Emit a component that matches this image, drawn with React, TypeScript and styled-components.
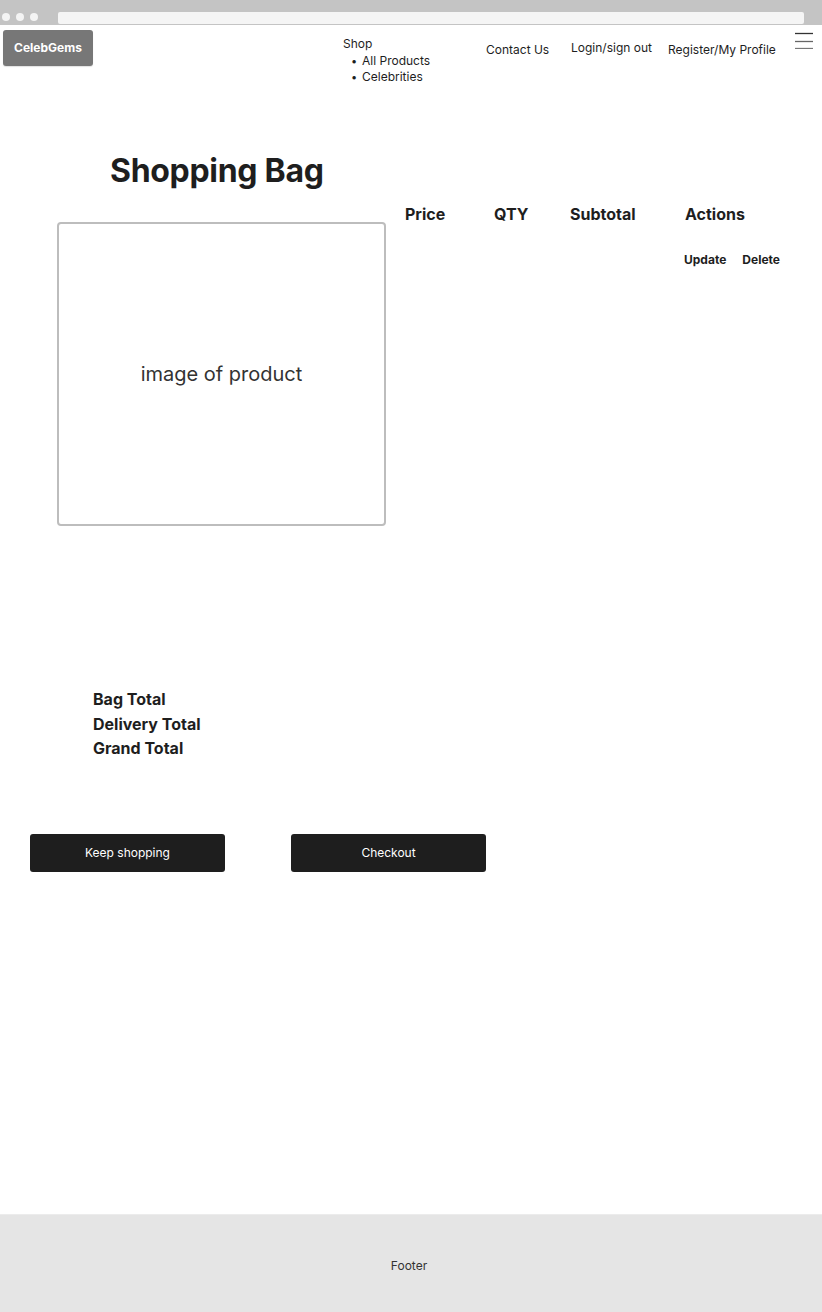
import * as React from 'react';
import styled, { createGlobalStyle } from 'styled-components';

const GlobalStyle = createGlobalStyle`
  html, body {
    margin: 0;
    padding: 0;
    background: #ffffff;
  }
  body {
    font-family: Inter, "Noto Sans", "Liberation Sans", sans-serif;
    color: #1e1e1e;
  }
`

const Page = styled.div`
  min-height: 1312px;
  display: flex;
  flex-direction: column;
`

const Chrome = styled.div`
  height: 25px;
  background: #c4c4c4;
  display: flex;
  align-items: flex-end;
  padding: 0 18px 1px 2px;
  gap: 6px;
  box-sizing: border-box;
`

const Dots = styled.div`
  display: flex;
  gap: 6px;
  padding-bottom: 3px;
`

const Dot = styled.span`
  width: 8px;
  height: 8px;
  border-radius: 50%;
  background: #f4f4f4;
`

const UrlBar = styled.div`
  flex: 1;
  height: 12px;
  margin-left: 14px;
  background: #f5f5f5;
  border-radius: 2px;
`

const Header = styled.header`
  height: 60px;
  box-sizing: border-box;
  padding: 5px 0 0 3px;
  display: grid;
  grid-template-columns: 340px 143px 85px 97px 127px 18px;
  align-items: start;
  font-size: 12px;
  line-height: 16.5px;
`

const Logo = styled.div`
  width: 90px;
  height: 36px;
  background: #777777;
  border-radius: 3px;
  color: #ffffff;
  font-weight: 700;
  font-size: 12px;
  display: flex;
  align-items: center;
  justify-content: center;
  box-shadow: 0 1px 1px rgba(0, 0, 0, 0.12);
`

const ShopMenu = styled.div`
  padding-top: 6px;

  ul {
    margin: 0;
    padding: 0 0 0 8px;
    list-style: none;
  }

  li::before {
    content: '•';
    display: inline-block;
    width: 11px;
    font-size: 11px;
  }
`

const NavLink = styled.span<{ $top: number }>`
  padding-top: ${p => p.$top}px;
  white-space: nowrap;
`

const Burger = styled.svg`
  margin-top: 1px;
  display: block;
`

const Main = styled.main`
  padding-top: 67px;
`

const Title = styled.h1`
  margin: 0 0 0 110px;
  font-size: 32px;
  line-height: 38px;
  font-weight: 700;
  letter-spacing: -0.3px;
`

const Cart = styled.section`
  margin-top: 14px;
  padding-left: 57px;
  display: flex;
  align-items: flex-start;
`

const ImageBox = styled.div`
  margin-top: 18px;
  width: 329px;
  height: 304px;
  box-sizing: border-box;
  border: 2px solid #bdbdbd;
  border-radius: 4px;
  display: flex;
  align-items: center;
  justify-content: center;
  font-size: 20px;
  color: #333333;
`

const Details = styled.div`
  margin-left: 19px;
`

const HeadRow = styled.div`
  display: grid;
  grid-template-columns: 89px 76px 115px auto;
`

const HeadCell = styled.div`
  font-size: 16px;
  line-height: 20px;
  font-weight: 700;
`

const ActionsRow = styled.div`
  margin: 28px 0 0 279px;
  display: flex;
  gap: 16px;
  font-size: 12px;
  line-height: 16px;
  font-weight: 700;
`

const Totals = styled.div`
  margin: 161px 0 0 93px;
  font-size: 16px;
  line-height: 24.5px;
  font-weight: 700;
`

const Buttons = styled.div`
  margin: 73px 0 0 30px;
  display: flex;
  gap: 66px;
`

const Button = styled.button`
  width: 195px;
  height: 38px;
  border: none;
  border-radius: 3px;
  background: #1e1e1e;
  color: #ffffff;
  font-family: inherit;
  font-size: 12px;
  cursor: pointer;
`

const Footer = styled.footer`
  margin-top: auto;
  height: 98px;
  box-sizing: border-box;
  background: #e5e5e5;
  border-top: 1px solid #ececec;
  display: flex;
  align-items: center;
  justify-content: center;
  padding: 4px 4px 0 0;
  font-size: 12px;
  color: #333333;
`

const App: React.FunctionComponent = () => {
  return (
    <Page>
      <GlobalStyle />
      <Chrome>
        <Dots>
          <Dot />
          <Dot />
          <Dot />
        </Dots>
        <UrlBar />
      </Chrome>

      <Header>
        <Logo>CelebGems</Logo>
        <ShopMenu>
          Shop
          <ul>
            <li>All Products</li>
            <li>Celebrities</li>
          </ul>
        </ShopMenu>
        <NavLink $top={12}>Contact Us</NavLink>
        <NavLink $top={10}>Login/sign out</NavLink>
        <NavLink $top={12}>Register/My Profile</NavLink>
        <Burger width="18" height="18" viewBox="0 0 18 18">
          <line x1="0" y1="2.5" x2="18" y2="2.5" stroke="#333" strokeWidth="1.3" />
          <line x1="0" y1="10.5" x2="18" y2="10.5" stroke="#666" strokeWidth="1.3" />
          <line x1="0" y1="17.5" x2="18" y2="17.5" stroke="#777" strokeWidth="1.3" />
        </Burger>
      </Header>

      <Main>
        <Title>Shopping Bag</Title>

        <Cart>
          <ImageBox>image of product</ImageBox>
          <Details>
            <HeadRow>
              <HeadCell>Price</HeadCell>
              <HeadCell>QTY</HeadCell>
              <HeadCell>Subtotal</HeadCell>
              <HeadCell>Actions</HeadCell>
            </HeadRow>
            <ActionsRow>
              <span>Update</span>
              <span>Delete</span>
            </ActionsRow>
          </Details>
        </Cart>

        <Totals>
          <div>Bag Total</div>
          <div>Delivery Total</div>
          <div>Grand Total</div>
        </Totals>

        <Buttons>
          <Button>Keep shopping</Button>
          <Button>Checkout</Button>
        </Buttons>
      </Main>

      <Footer>Footer</Footer>
    </Page>
  );
};

export default App;
